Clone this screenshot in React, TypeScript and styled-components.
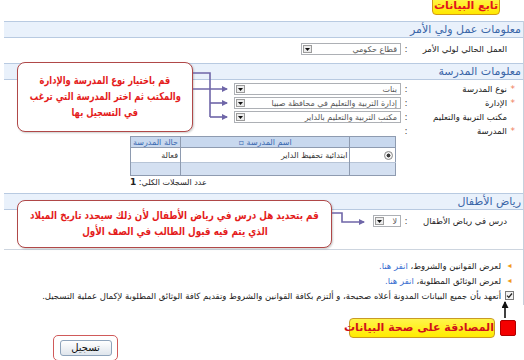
import React from "react";
import styled, { createGlobalStyle } from "styled-components";

const FONT = `"DejaVu Sans", "Noto Sans", sans-serif`;

const GlobalStyle = createGlobalStyle`
  html, body { margin: 0; padding: 0; background: #fff; }
  body { width: 524px; height: 360px; overflow: hidden; }
`;

const Page = styled.div`
  position: relative;
  width: 524px;
  height: 360px;
  overflow: hidden;
  direction: rtl;
  font-family: ${FONT};
  color: #222;
  background: #fff;
`;

const TopBar = styled.div`
  height: 21px;
  display: flex;
  padding-right: 24px;
`;

const TitleBadge = styled.div`
  margin-top: -3px;
  width: 68px;
  height: 18px;
  box-sizing: border-box;
  display: flex;
  align-items: flex-end;
  justify-content: center;
  padding-bottom: 1px;
  background: linear-gradient(#fff64a, #ffe800);
  border: 1px solid #d49a14;
  border-radius: 0 0 4px 4px;
  color: #e2141c;
  font: bold 11px/14px ${FONT};
  white-space: nowrap;
`;

const Panel = styled.div`
  width: 520px;
  box-sizing: border-box;
  border-right: 1px solid #c6d0dc;
  padding-bottom: 2px;
`;

const SectionHeader = styled.div`
  height: 17px;
  box-sizing: border-box;
  background: #e9f1fb;
  border-top: 1px solid #b8cae1;
  border-bottom: 1px solid #b8cae1;
  color: #3b66a8;
  font: 11px/15px ${FONT};
  padding-right: 2px;
  white-space: nowrap;
`;

const SectionBody = styled.div<{ $top: number; $bottom: number; $line?: boolean }>`
  padding-top: ${p => p.$top}px;
  padding-bottom: ${p => p.$bottom}px;
  border-bottom: ${p => (p.$line ? "1px solid #cdd5df" : "none")};
`;

const FormRow = styled.div`
  display: flex;
  align-items: flex-start;
  min-height: 14px;
`;

const LabelCell = styled.div`
  width: 112px;
  box-sizing: border-box;
  padding-right: 8px;
  display: flex;
  font-size: 8.5px;
  line-height: 14px;
  color: #222;
  white-space: nowrap;
`;

const Required = styled.span`
  width: 8px;
  color: #f08060;
  font-size: 9px;
`;

const ColonCell = styled.div`
  width: 10px;
  text-align: center;
  font-size: 9px;
  line-height: 14px;
  color: #444;
`;

const Field = styled.div`
  display: flex;
  flex-direction: column;
`;

const SelectBox = styled.div<{ $w: number }>`
  width: ${p => p.$w}px;
  height: 12px;
  margin-top: 1px;
  box-sizing: border-box;
  border: 1px solid #adb0b5;
  background: #fff;
  display: flex;
  align-items: center;
`;

const SelectText = styled.span`
  flex: 1;
  padding-right: 3px;
  font-size: 8px;
  color: #555;
  white-space: nowrap;
  overflow: hidden;
`;

const SelectArrow = styled.span`
  width: 9px;
  height: 8px;
  margin-left: 1px;
  box-sizing: border-box;
  border: 1px solid #9c9c9c;
  background: #ececec;
  display: flex;
  align-items: center;
  justify-content: center;
`;

const Grid = styled.table`
  width: 266px;
  margin: 12px 5px 0 0;
  border-collapse: collapse;
  border: 1px solid #8e9bb0;
  font-size: 8px;
`;

const HeadCell = styled.th<{ $w: number }>`
  width: ${p => p.$w}px;
  height: 10px;
  padding: 0 2px;
  background: #c8d8ee;
  color: #3a68b0;
  font-weight: normal;
  border: 1px solid #8e9bb0;
  white-space: nowrap;
`;

const BodyCell = styled.td`
  height: 14px;
  padding: 0 2px;
  text-align: right;
  border-left: 1px solid #8e9bb0;
  color: #333;
  white-space: nowrap;
`;

const FootCell = styled.td`
  height: 10px;
  background: #d4e0f1;
  border-top: 1px solid #b7c4d6;
  border-left: 1px solid #8e9bb0;
`;

const Radio = styled.span`
  display: inline-block;
  width: 7px;
  height: 7px;
  border-radius: 50%;
  border: 1px solid #8a8a8a;
  background: radial-gradient(circle, #3b3b3b 0 35%, #f2f2f2 45%);
  vertical-align: middle;
`;

const RecordCount = styled.div`
  width: 266px;
  margin: 1px 5px 0 0;
  text-align: left;
  font-size: 8px;
  line-height: 10px;
  color: #222;
  b { font-size: 9px; }
`;

const LinksBlock = styled.div`
  padding: 8px 9px 0 0;
`;

const InfoLine = styled.div`
  display: flex;
  align-items: center;
  gap: 4px;
  height: 15px;
  font-size: 8.5px;
  white-space: nowrap;
`;

const Bullet = styled.span`
  width: 9px;
  text-align: center;
  color: #f29a1c;
  font-size: 8px;
`;

const LinkText = styled.span`
  color: #3c6fd0;
`;

const CheckBox = styled.span`
  width: 9px;
  height: 9px;
  box-sizing: border-box;
  border: 1px solid #7a7a7a;
  background: #f3f3f3;
  display: flex;
  align-items: center;
  justify-content: center;
`;

const NoteRow = styled.div`
  display: flex;
  align-items: center;
  gap: 5px;
  margin-top: 13px;
  padding-right: 8px;
  height: 20px;
`;

const RedSquare = styled.span`
  width: 16px;
  height: 16px;
  box-sizing: border-box;
  border: 1px solid #b00000;
  border-radius: 2px;
  background: #f40000;
`;

const NoteBadge = styled.div`
  width: 146px;
  height: 20px;
  box-sizing: border-box;
  border: 1.5px solid #c89a26;
  border-radius: 4px;
  background: linear-gradient(#fff54a, #ffeb00);
  color: #d1101b;
  font: bold 11px/17px ${FONT};
  text-align: center;
  white-space: nowrap;
`;

const ButtonRow = styled.div`
  display: flex;
  justify-content: flex-end;
  padding-left: 53px;
  margin-top: -3px;
`;

const ButtonFrame = styled.div`
  width: 65px;
  height: 26px;
  box-sizing: border-box;
  border: 1.5px solid #d05a5a;
  border-radius: 5px;
  display: flex;
  align-items: center;
  justify-content: center;
`;

const SubmitButton = styled.button`
  width: 52px;
  height: 16px;
  padding: 0;
  border: 1px solid #8ea3bb;
  border-radius: 3px;
  background: linear-gradient(#ffffff, #dfe5ec);
  font: 10px/14px ${FONT};
  color: #111;
`;

const Callout = styled.div<{ $top: number; $left: number; $w: number; $h: number }>`
  position: absolute;
  top: ${p => p.$top}px;
  left: ${p => p.$left}px;
  width: ${p => p.$w}px;
  height: ${p => p.$h}px;
  box-sizing: border-box;
  border: 1.5px solid #b04848;
  border-radius: 8px;
  background: #fff;
  box-shadow: 1px 1px 2px rgba(0, 0, 0, 0.2);
  display: flex;
  flex-direction: column;
  align-items: center;
  justify-content: center;
  color: #e41c1c;
  font: bold 11px/16px ${FONT};
  white-space: nowrap;
`;

// DejaVu's Arabic runs wider than the Tahoma in the shot, so squeeze each line
const CalloutLine = styled.span<{ $sx: number }>`
  display: block;
  transform: scaleX(${p => p.$sx});
`;

const Overlay = styled.svg`
  position: absolute;
  top: 0;
  left: 0;
  pointer-events: none;
`;

const DownTri = () => (
  <svg width="5" height="3" viewBox="0 0 5 3"><path d="M0 0h5L2.5 3z" fill="#111" /></svg>
);

const Select = ({ w, value }: { w: number; value?: string }) => (
  <SelectBox $w={w}>
    <SelectText>{value}</SelectText>
    <SelectArrow><DownTri /></SelectArrow>
  </SelectBox>
);

const Label = ({ text, req }: { text: string; req?: boolean }) => (
  <LabelCell>
    <Required>{req ? "*" : ""}</Required>
    {text}
  </LabelCell>
);

export default function App() {
  return (
    <Page>
      <GlobalStyle />
      <TopBar>
        <TitleBadge>تابع البيانات</TitleBadge>
      </TopBar>

      <Panel>
        <SectionHeader>معلومات عمل ولي الأمر</SectionHeader>
        <SectionBody $top={4} $bottom={7}>
          <FormRow>
            <Label text="العمل الحالي لولي الأمر" />
            <ColonCell>:</ColonCell>
            <Field><Select w={100} value="قطاع حكومي" /></Field>
          </FormRow>
        </SectionBody>

        <SectionHeader>معلومات المدرسة</SectionHeader>
        <SectionBody $top={2} $bottom={5}>
          <FormRow>
            <Label text="نوع المدرسة" req />
            <ColonCell>:</ColonCell>
            <Field><Select w={167} value="بنات" /></Field>
          </FormRow>
          <FormRow>
            <Label text="الإدارة" req />
            <ColonCell>:</ColonCell>
            <Field><Select w={167} value="إدارة التربية والتعليم في محافظة صبيا" /></Field>
          </FormRow>
          <FormRow>
            <Label text="مكتب التربية والتعليم" />
            <ColonCell>:</ColonCell>
            <Field><Select w={167} value="مكتب التربية والتعليم بالداير" /></Field>
          </FormRow>
          <FormRow>
            <Label text="المدرسة" req />
            <ColonCell>:</ColonCell>
            <Field>
              <Grid>
                <thead>
                  <tr>
                    <HeadCell $w={46}></HeadCell>
                    <HeadCell $w={181}>اسم المدرسة ▫</HeadCell>
                    <HeadCell $w={39}>حالة المدرسة</HeadCell>
                  </tr>
                </thead>
                <tbody>
                  <tr>
                    <BodyCell><Radio /></BodyCell>
                    <BodyCell>ابتدائية تحفيظ الداير</BodyCell>
                    <BodyCell>فعالة</BodyCell>
                  </tr>
                  <tr>
                    <FootCell />
                    <FootCell />
                    <FootCell />
                  </tr>
                </tbody>
              </Grid>
              <RecordCount>عدد السجلات الكلي: <b>1</b></RecordCount>
            </Field>
          </FormRow>
        </SectionBody>

        <SectionHeader>رياض الأطفال</SectionHeader>
        <SectionBody $top={4} $bottom={21} $line>
          <FormRow>
            <Label text="درس في رياض الأطفال" />
            <ColonCell>:</ColonCell>
            <Field><Select w={28} value="لا" /></Field>
          </FormRow>
        </SectionBody>

        <LinksBlock>
          <InfoLine>
            <Bullet>◂</Bullet>
            <span>لعرض القوانين والشروط، <LinkText>انقر هنا.</LinkText></span>
          </InfoLine>
          <InfoLine>
            <Bullet>◂</Bullet>
            <span>لعرض الوثائق المطلوبة، <LinkText>انقر هنا.</LinkText></span>
          </InfoLine>
          <InfoLine>
            <CheckBox>
              <svg width="7" height="7" viewBox="0 0 7 7">
                <path d="M1 3.6l1.8 1.8L6 1.5" fill="none" stroke="#222" strokeWidth="1.3" />
              </svg>
            </CheckBox>
            <span>أتعهد بأن جميع البيانات المدونة أعلاه صحيحة، و ألتزم بكافة القوانين والشروط وتقديم كافة الوثائق المطلوبة لإكمال عملية التسجيل.</span>
          </InfoLine>
        </LinksBlock>
      </Panel>

      <NoteRow>
        <RedSquare />
        <NoteBadge>المصادقة على صحة البيانات</NoteBadge>
      </NoteRow>

      <ButtonRow>
        <ButtonFrame>
          <SubmitButton>تسجيل</SubmitButton>
        </ButtonFrame>
      </ButtonRow>

      <Callout $top={62} $left={17} $w={176} $h={70}>
        <CalloutLine $sx={0.76}>قم باختيار نوع المدرسة والإدارة</CalloutLine>
        <CalloutLine $sx={0.76}>والمكتب ثم اختر المدرسة التي ترغب</CalloutLine>
        <CalloutLine $sx={0.76}>في التسجيل بها</CalloutLine>
      </Callout>

      <Callout $top={200} $left={17} $w={315} $h={48}>
        <CalloutLine $sx={0.8}>قم بتحديد هل درس  في رياض الأطفال  لأن ذلك سيحدد تاريخ الميلاد</CalloutLine>
        <CalloutLine $sx={0.8}>الذي يتم فيه قبول الطالب في الصف الأول</CalloutLine>
      </Callout>

      <Overlay width="524" height="360" viewBox="0 0 524 360">
        <defs>
          <marker id="tip" markerWidth="6" markerHeight="6" refX="5" refY="3" orient="auto" markerUnits="userSpaceOnUse">
            <path d="M0 0L6 3L0 6z" fill="#6f66a8" />
          </marker>
          <marker id="up" markerWidth="7" markerHeight="7" refX="6" refY="3.5" orient="auto" markerUnits="userSpaceOnUse">
            <path d="M0 0L7 3.5L0 7z" fill="#111" />
          </marker>
        </defs>
        <g fill="none" stroke="#6f66a8" strokeWidth="1.6">
          <path d="M193 73H210V117" />
          <path d="M193 89H227" markerEnd="url(#tip)" />
          <path d="M210 103H227" markerEnd="url(#tip)" />
          <path d="M210 117H227" markerEnd="url(#tip)" />
          <path d="M332 213H342V222H364" markerEnd="url(#tip)" />
        </g>
        <path d="M505 318V302" stroke="#111" strokeWidth="1.6" markerEnd="url(#up)" />
      </Overlay>
    </Page>
  );
}
